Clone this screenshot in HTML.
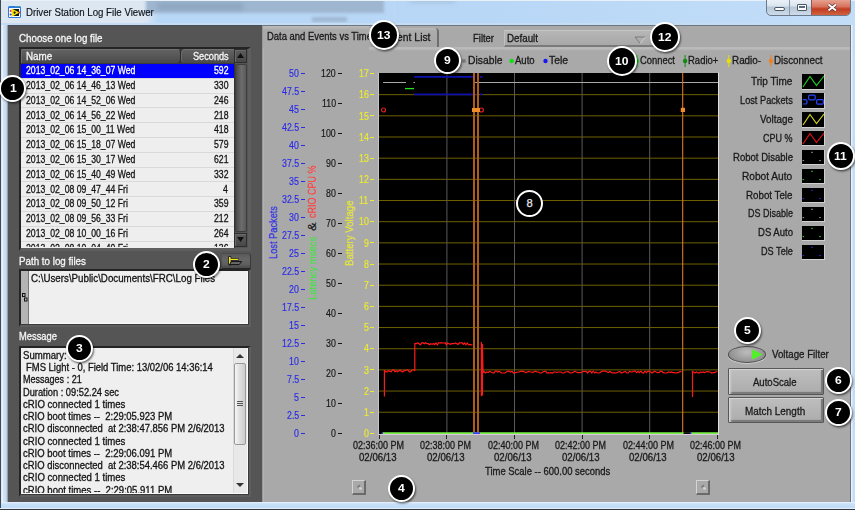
<!DOCTYPE html>
<html><head><meta charset="utf-8"><style>
*{margin:0;padding:0;box-sizing:border-box}
html,body{width:855px;height:510px;overflow:hidden;background:#b9d7f5}
body{position:relative;font-family:"Liberation Sans",sans-serif;font-size:10px;color:#1a1a1a}
.a{position:absolute}
.t{position:absolute;white-space:nowrap;line-height:1;transform-origin:0 0}
.co{position:absolute;border-radius:50%;background:#000;border:2px solid #fff;box-shadow:1px 1.5px 2px rgba(0,0,0,.55)}
</style></head><body>
<div class="a" style="left:0;top:0;width:855px;height:510px;background:#b8d6f4"></div>
<div class="a" style="left:0;top:0;width:855px;height:25px;overflow:hidden;background:linear-gradient(90deg,#b8d7f6 0,#b8d7f6 480px,#c2ddf8 855px)"><div class="a" style="left:-20px;top:-5px;width:172px;height:34px;background:#dde7f1;filter:blur(4px)"></div><div class="a" style="left:146px;top:-2px;width:238px;height:14.5px;background:#9eb6d0;filter:blur(1.5px)"></div><div class="a" style="left:158px;top:3px;width:85px;height:7px;background:#8ea6c0;filter:blur(2px)"></div><div class="a" style="left:312px;top:17px;width:35px;height:5px;background:#a0b8d2;filter:blur(1.5px)"></div><div class="a" style="left:394px;top:0;width:1px;height:24px;background:#c0d8f0"></div><div class="a" style="left:410px;top:-3px;width:45px;height:6px;background:#a8c4e0;filter:blur(2px)"></div><div class="a" style="left:0;top:0;width:855px;height:1px;background:#e8f0f8"></div><div class="a" style="left:0;top:23px;width:855px;height:2px;background:#c4dcf4"></div></div>
<div class="a" style="left:0;top:0;width:1px;height:510px;background:#3e4a56"></div>
<div class="a" style="left:1px;top:25px;width:7px;height:477px;background:linear-gradient(90deg,#c8d8e8 0,#f2f8fd 1px,#d4e4f4 2.5px,#c6dbf0 5px,#aec4da 6px,#70808e 7px)"></div>
<div class="a" style="left:851px;top:25px;width:4px;height:477px;background:linear-gradient(90deg,#eef6fd 0,#e4f0fc 1px,#c4def8 2px,#c2dcf6 4px)"></div>
<div class="a" style="left:1px;top:502px;width:854px;height:6px;background:linear-gradient(180deg,#e8f2fc,#c8e0f8 2px,#c2dcf6 5px)"></div>
<div class="a" style="left:0;top:508px;width:855px;height:1px;background:#e4eef8"></div>
<div class="a" style="left:0;top:509px;width:855px;height:1px;background:#2e3640"></div>
<div class="a" style="left:8px;top:5.7px;width:13px;height:12.5px;background:#fff;border:1px solid #2a78e0;border-top:2.5px solid #2a78e0;border-radius:1.5px"></div>
<div class="a" style="left:15px;top:5.9px;width:4px;height:1.5px;background:#40a890"></div>
<div class="a" style="left:12px;top:9px;width:7px;height:7px;background:#101810"></div>
<svg class="a" style="left:9px;top:8px" width="12" height="10"><polygon points="2.5,0.5 10.5,4.5 2.5,9" fill="#f4e010"/><circle cx="5.6" cy="4.6" r="1.1" fill="#111"/><circle cx="1.6" cy="3" r="1" fill="#e83030"/><circle cx="1.6" cy="6.4" r="1" fill="#3030e8"/><circle cx="10.6" cy="4.4" r="1" fill="#e83030"/></svg>
<div class="t" style="left:25.90px;top:7.59px;font-size:10.4px;color:#0c1018;-webkit-text-stroke:0.15px #0c1018;transform:scaleX(0.9310);">Driver Station Log File Viewer</div>
<div class="a" style="left:766px;top:-3px;width:85px;height:19px;border:1px solid #6a7a8c;border-radius:0 0 5px 5px;background:linear-gradient(180deg,#f0f5fa 0,#dbe5ef 45%,#b8c8d8 55%,#cddbe9 100%);overflow:hidden">
<div class="a" style="left:44px;top:0;width:41px;height:19px;background:linear-gradient(180deg,#eab0a0 0,#d8735e 45%,#c03c22 58%,#d8704a 100%);border-left:1px solid #8a5a50"></div>
<div class="a" style="left:22px;top:0;width:1px;height:19px;background:#8a9aaa"></div>
<div class="a" style="left:7px;top:9.3px;width:11px;height:4px;background:#fff;border:1px solid #4a5866;border-radius:2px"></div>
<div class="a" style="left:30px;top:5.6px;width:10px;height:7.5px;background:#fff;border:1px solid #4a5866;border-radius:1px"></div>
<div class="a" style="left:32px;top:7.6px;width:6px;height:2.5px;background:#5a6a7a"></div>
<svg class="a" style="left:59px;top:4px" width="13" height="11"><path d="M2.5 2.5L10 8.5M10 2.5L2.5 8.5" stroke="#5a3030" stroke-width="3.4"/><path d="M2.5 2.5L10 8.5M10 2.5L2.5 8.5" stroke="#fff" stroke-width="2"/></svg>
</div>
<div class="a" style="left:8px;top:25px;width:254px;height:477px;background:#555555"></div>
<div class="a" style="left:262px;top:25px;width:589px;height:477px;background:#a9a9a9;border-left:1px solid #989898;border-right:1px solid #6c737a;border-top:1px solid #6e7680;box-shadow:inset 1px 0 0 #b2b2b2"></div>
<div class="a" style="left:8px;top:25px;width:254px;height:1px;background:#4a4f55"></div>
<div class="t" style="left:19.10px;top:32.92px;font-size:10.6px;color:#f6f6f6;-webkit-text-stroke:0.3px #f6f6f6;transform:scaleX(0.9203);">Choose one log file</div>
<div class="a" style="left:19px;top:47px;width:231.6px;height:203.7px;border-style:solid;border-width:2px 3px 3px 2px;border-color:#242424 #5e5e5e #5e5e5e #242424;background:#3a3a3a"></div>
<div class="a" style="left:21px;top:49px;width:160px;height:14px;background:linear-gradient(180deg,#626262,#4a4a4a);border-top:1px solid #727272;border-left:1px solid #6a6a6a;border-right:1px solid #2a2a2a;border-radius:0 4px 4px 0"></div>
<div class="a" style="left:181px;top:49px;width:53px;height:14px;background:linear-gradient(180deg,#626262,#4a4a4a);border-top:1px solid #727272;border-left:1px solid #6a6a6a;border-radius:4px 0 0 4px"></div>
<div class="t" style="left:25.60px;top:50.62px;font-size:10.6px;color:#f6f6f6;-webkit-text-stroke:0.3px #f6f6f6;transform:scaleX(0.9293);">Name</div>
<div class="t" style="left:192.60px;top:50.62px;font-size:10.6px;color:#f6f6f6;-webkit-text-stroke:0.3px #f6f6f6;transform:scaleX(0.8658);">Seconds</div>
<div class="a" style="left:234px;top:49px;width:14px;height:199px;background:#555;border-left:1px solid #333"></div>
<div class="a" style="left:234px;top:49px;width:13px;height:14px;background:linear-gradient(180deg,#5c5c5c,#484848);border:1px solid #2e2e2e;box-shadow:inset 1px 1px 0 #6a6a6a"></div>
<svg class="a" style="left:236px;top:52px" width="9" height="8"><polygon points="4.5,1 8,6 1,6" fill="#111"/></svg>
<div class="a" style="left:235px;top:64px;width:12px;height:168px;background:linear-gradient(90deg,#4a4a4a,#6c6c6c 55%,#5a5a5a);border-radius:2px;border:1px solid #3e3e3e"></div>
<div class="a" style="left:234px;top:233px;width:13px;height:14px;background:linear-gradient(180deg,#5c5c5c,#484848);border:1px solid #2e2e2e;box-shadow:inset 1px 1px 0 #6a6a6a"></div>
<svg class="a" style="left:236px;top:236px" width="9" height="8"><polygon points="1,1 8,1 4.5,6" fill="#111"/></svg>
<div class="a" style="left:21px;top:63.5px;width:213px;height:184px;background:repeating-linear-gradient(180deg,#eeeeee 0,#eeeeee 13.8px,#d9d9d9 13.8px,#d9d9d9 14.8px)"></div>
<div class="a" style="left:21px;top:63.5px;width:213px;height:14.8px;background:#0000ff"></div>
<div class="t" style="left:25.60px;top:65.12px;font-size:10.6px;color:#ffffff;-webkit-text-stroke:0.3px #ffffff;transform:scaleX(0.8195);">2013_02_06 14_36_07 Wed</div>
<div class="t" style="left:213.79px;top:65.12px;font-size:10.6px;color:#ffffff;-webkit-text-stroke:0.3px #ffffff;transform:scaleX(0.8195);">592</div>
<div class="t" style="left:25.60px;top:79.92px;font-size:10.6px;color:#141414;-webkit-text-stroke:0.3px #141414;transform:scaleX(0.8195);">2013_02_06 14_46_13 Wed</div>
<div class="t" style="left:213.79px;top:79.92px;font-size:10.6px;color:#141414;-webkit-text-stroke:0.3px #141414;transform:scaleX(0.8195);">330</div>
<div class="t" style="left:25.60px;top:94.72px;font-size:10.6px;color:#141414;-webkit-text-stroke:0.3px #141414;transform:scaleX(0.8195);">2013_02_06 14_52_06 Wed</div>
<div class="t" style="left:213.79px;top:94.72px;font-size:10.6px;color:#141414;-webkit-text-stroke:0.3px #141414;transform:scaleX(0.8195);">246</div>
<div class="t" style="left:25.60px;top:109.52px;font-size:10.6px;color:#141414;-webkit-text-stroke:0.3px #141414;transform:scaleX(0.8195);">2013_02_06 14_56_22 Wed</div>
<div class="t" style="left:213.79px;top:109.52px;font-size:10.6px;color:#141414;-webkit-text-stroke:0.3px #141414;transform:scaleX(0.8195);">218</div>
<div class="t" style="left:25.60px;top:124.32px;font-size:10.6px;color:#141414;-webkit-text-stroke:0.3px #141414;transform:scaleX(0.8195);">2013_02_06 15_00_11 Wed</div>
<div class="t" style="left:213.79px;top:124.32px;font-size:10.6px;color:#141414;-webkit-text-stroke:0.3px #141414;transform:scaleX(0.8195);">418</div>
<div class="t" style="left:25.60px;top:139.12px;font-size:10.6px;color:#141414;-webkit-text-stroke:0.3px #141414;transform:scaleX(0.8195);">2013_02_06 15_18_07 Wed</div>
<div class="t" style="left:213.79px;top:139.12px;font-size:10.6px;color:#141414;-webkit-text-stroke:0.3px #141414;transform:scaleX(0.8195);">579</div>
<div class="t" style="left:25.60px;top:153.92px;font-size:10.6px;color:#141414;-webkit-text-stroke:0.3px #141414;transform:scaleX(0.8195);">2013_02_06 15_30_17 Wed</div>
<div class="t" style="left:213.79px;top:153.92px;font-size:10.6px;color:#141414;-webkit-text-stroke:0.3px #141414;transform:scaleX(0.8195);">621</div>
<div class="t" style="left:25.60px;top:168.72px;font-size:10.6px;color:#141414;-webkit-text-stroke:0.3px #141414;transform:scaleX(0.8195);">2013_02_06 15_40_49 Wed</div>
<div class="t" style="left:213.79px;top:168.72px;font-size:10.6px;color:#141414;-webkit-text-stroke:0.3px #141414;transform:scaleX(0.8195);">332</div>
<div class="t" style="left:25.60px;top:183.52px;font-size:10.6px;color:#141414;-webkit-text-stroke:0.3px #141414;transform:scaleX(0.8195);">2013_02_08 09_47_44 Fri</div>
<div class="t" style="left:223.48px;top:183.52px;font-size:10.6px;color:#141414;-webkit-text-stroke:0.3px #141414;transform:scaleX(0.8195);">4</div>
<div class="t" style="left:25.60px;top:198.32px;font-size:10.6px;color:#141414;-webkit-text-stroke:0.3px #141414;transform:scaleX(0.8195);">2013_02_08 09_50_12 Fri</div>
<div class="t" style="left:213.79px;top:198.32px;font-size:10.6px;color:#141414;-webkit-text-stroke:0.3px #141414;transform:scaleX(0.8195);">359</div>
<div class="t" style="left:25.60px;top:213.12px;font-size:10.6px;color:#141414;-webkit-text-stroke:0.3px #141414;transform:scaleX(0.8195);">2013_02_08 09_56_33 Fri</div>
<div class="t" style="left:213.79px;top:213.12px;font-size:10.6px;color:#141414;-webkit-text-stroke:0.3px #141414;transform:scaleX(0.8195);">212</div>
<div class="t" style="left:25.60px;top:227.92px;font-size:10.6px;color:#141414;-webkit-text-stroke:0.3px #141414;transform:scaleX(0.8195);">2013_02_08 10_00_16 Fri</div>
<div class="t" style="left:213.79px;top:227.92px;font-size:10.6px;color:#141414;-webkit-text-stroke:0.3px #141414;transform:scaleX(0.8195);">264</div>
<div class="a" style="left:21px;top:241.1px;width:213px;height:6.4px;overflow:hidden">
<div class="t" style="left:4.60px;top:1.62px;font-size:10.6px;color:#141414;-webkit-text-stroke:0.3px #141414;transform:scaleX(0.8195);">2013_02_08 10_04_40 Fri</div>
<div class="t" style="left:192.79px;top:1.62px;font-size:10.6px;color:#141414;-webkit-text-stroke:0.3px #141414;transform:scaleX(0.8195);">136</div>
</div>
<div class="t" style="left:19.20px;top:256.32px;font-size:10.6px;color:#f6f6f6;-webkit-text-stroke:0.3px #f6f6f6;transform:scaleX(0.9241);">Path to log files</div>
<div class="a" style="left:220.5px;top:253px;width:30px;height:17px;background:linear-gradient(180deg,#5a5a5a 0,#666 40%,#5e5e5e 75%,#4a4a4a 100%);border-top:1px solid #4a4a4a;border-left:1px solid #555;border-right:1px solid #3a3a3a;border-bottom:2px solid #262626;border-radius:3px 3px 0 0"></div>
<svg class="a" style="left:227px;top:255px" width="17" height="12"><path d="M2.8 9 V2.3" stroke="#141430" stroke-width="3.2" stroke-linecap="round"/><path d="M3 4.4 H11.6" stroke="#141430" stroke-width="2.8"/><path d="M2.8 8.6 V2.6" stroke="#f0e818" stroke-width="1.7" stroke-linecap="round"/><path d="M3.2 4.4 H11.2" stroke="#f0e818" stroke-width="1.3"/><polygon points="2.6,9.6 12.2,9.6 14.6,6.6 4.2,6.6" fill="#6a6a6a" stroke="#111" stroke-width="1"/></svg>
<div class="a" style="left:19px;top:269px;width:231.5px;height:57.5px;border-style:solid;border-width:2px 3px 3px 2px;border-color:#242424 #5e5e5e #5e5e5e #242424;background:#3a3a3a"></div>
<div class="a" style="left:247.5px;top:271px;width:1px;height:53.5px;background:#3a3a3a"></div>
<div class="a" style="left:21px;top:323.5px;width:227.5px;height:1px;background:#3a3a3a"></div>
<div class="a" style="left:21px;top:271px;width:226.5px;height:52.5px;background:#efefef;border-right:1px solid #fafafa;border-bottom:1px solid #fafafa"></div>
<div class="a" style="left:21px;top:271px;width:8px;height:53px;background:#b4b4b4;border-right:1px solid #777"></div>
<svg class="a" style="left:22px;top:293px" width="6" height="10"><rect x="0.5" y="0.5" width="2.5" height="3" fill="none" stroke="#111" stroke-width="1"/><rect x="2.5" y="5" width="2.5" height="3" fill="none" stroke="#111" stroke-width="1"/></svg>
<div class="t" style="left:30.70px;top:272.82px;font-size:10.6px;color:#141414;-webkit-text-stroke:0.3px #141414;transform:scaleX(0.9197);">C:\Users\Public\Documents\FRC\Log Files</div>
<div class="t" style="left:19.20px;top:330.92px;font-size:10.6px;color:#f6f6f6;-webkit-text-stroke:0.3px #f6f6f6;transform:scaleX(0.8807);">Message</div>
<div class="a" style="left:19px;top:346px;width:231.5px;height:150.5px;border-style:solid;border-width:2px 3px 3px 2px;border-color:#242424 #5e5e5e #5e5e5e #242424;background:#3a3a3a"></div>
<div class="a" style="left:247.5px;top:348px;width:1px;height:146.5px;background:#3a3a3a"></div>
<div class="a" style="left:21px;top:493.5px;width:227.5px;height:1px;background:#3a3a3a"></div>
<div class="a" style="left:21px;top:348px;width:226.5px;height:145.5px;background:#efefef;border-right:1px solid #fafafa;border-bottom:1px solid #fafafa;overflow:hidden">
<div class="t" style="left:2.10px;top:2.93px;font-size:10.0px;color:#141414;-webkit-text-stroke:0.3px #141414;transform:scaleX(0.9597);">Summary:</div>
<div class="t" style="left:4.70px;top:15.18px;font-size:10.0px;color:#141414;-webkit-text-stroke:0.3px #141414;transform:scaleX(0.9439);">FMS Light - 0, Field Time: 13/02/06 14:36:14</div>
<div class="t" style="left:2.10px;top:27.43px;font-size:10.0px;color:#141414;-webkit-text-stroke:0.3px #141414;transform:scaleX(0.9024);">Messages : 21</div>
<div class="t" style="left:2.10px;top:39.68px;font-size:10.0px;color:#141414;-webkit-text-stroke:0.3px #141414;transform:scaleX(0.9284);">Duration : 09:52.24 sec</div>
<div class="t" style="left:2.10px;top:51.93px;font-size:10.0px;color:#141414;-webkit-text-stroke:0.3px #141414;transform:scaleX(0.9597);">cRIO connected 1 times</div>
<div class="t" style="left:2.10px;top:64.18px;font-size:10.0px;color:#141414;-webkit-text-stroke:0.3px #141414;transform:scaleX(0.9485);">cRIO&nbsp;boot&nbsp;times&nbsp;--&nbsp;&nbsp;2:29:05.923&nbsp;PM</div>
<div class="t" style="left:2.10px;top:76.43px;font-size:10.0px;color:#141414;-webkit-text-stroke:0.3px #141414;transform:scaleX(0.9440);">cRIO&nbsp;disconnected&nbsp;&nbsp;at&nbsp;2:38:47.856&nbsp;PM&nbsp;2/6/2013</div>
<div class="t" style="left:2.10px;top:88.68px;font-size:10.0px;color:#141414;-webkit-text-stroke:0.3px #141414;transform:scaleX(0.9597);">cRIO connected 1 times</div>
<div class="t" style="left:2.10px;top:100.93px;font-size:10.0px;color:#141414;-webkit-text-stroke:0.3px #141414;transform:scaleX(0.9485);">cRIO&nbsp;boot&nbsp;times&nbsp;--&nbsp;&nbsp;2:29:06.091&nbsp;PM</div>
<div class="t" style="left:2.10px;top:113.18px;font-size:10.0px;color:#141414;-webkit-text-stroke:0.3px #141414;transform:scaleX(0.9440);">cRIO&nbsp;disconnected&nbsp;&nbsp;at&nbsp;2:38:54.466&nbsp;PM&nbsp;2/6/2013</div>
<div class="t" style="left:2.10px;top:125.43px;font-size:10.0px;color:#141414;-webkit-text-stroke:0.3px #141414;transform:scaleX(0.9597);">cRIO connected 1 times</div>
<div class="t" style="left:2.10px;top:137.68px;font-size:10.0px;color:#141414;-webkit-text-stroke:0.3px #141414;transform:scaleX(0.9531);">cRIO&nbsp;boot&nbsp;times&nbsp;--&nbsp;&nbsp;2:29:05.911&nbsp;PM</div>
<div class="a" style="left:212px;top:0;width:14px;height:145px;background:#e8e8e8;border-left:1px solid #dadada"></div>
<svg class="a" style="left:214px;top:5px" width="10" height="6"><polygon points="5,1 9,5 1,5" fill="#333"/></svg>
<div class="a" style="left:213px;top:15px;width:12px;height:82px;background:linear-gradient(90deg,#f6f6f6,#e0e0e0 45%,#cdcdcd);border:1px solid #9a9a9a;border-radius:2px"></div>
<div class="a" style="left:216px;top:53px;width:6px;height:5px;border-top:1px solid #555;border-bottom:1px solid #555"></div>
<div class="a" style="left:216px;top:55px;width:6px;height:1px;background:#555"></div>
<svg class="a" style="left:214px;top:134px" width="10" height="6"><polygon points="1,1 9,1 5,5" fill="#333"/></svg>
</div>
<div class="a" style="left:369px;top:47px;width:481px;height:3.5px;background:linear-gradient(180deg,#b4b4b4 0,#bebebe 1px,#acacac 3.5px)"></div>
<div class="a" style="left:263px;top:26px;width:106px;height:22px;background:linear-gradient(180deg,#bababa 0,#b4b4b4 2px,#a9a9a9 4px)"></div>
<div class="t" style="left:266.60px;top:31.12px;font-size:10.6px;color:#1a1a1a;-webkit-text-stroke:0.3px #1a1a1a;transform:scaleX(0.8912);">Data and Events vs Time</div>
<div class="a" style="left:369px;top:28px;width:70px;height:19px;background:linear-gradient(180deg,#b8b8b8 0,#acacac 3px,#a6a6a6 100%);border-right:2px solid #6e6e6e;border-radius:0 4px 0 0"></div>
<div class="t" style="left:385.30px;top:32.02px;font-size:10.6px;color:#1a1a1a;-webkit-text-stroke:0.3px #1a1a1a;transform:scaleX(0.9778);">Event List</div>
<div class="t" style="left:473.00px;top:32.92px;font-size:10.6px;color:#1a1a1a;-webkit-text-stroke:0.3px #1a1a1a;transform:scaleX(0.8924);">Filter</div>
<div class="a" style="left:503.8px;top:30px;width:170px;height:16.5px;background:linear-gradient(180deg,#b6b6b6,#a8a8a8);border-top:1px solid #c6c6c6;border-left:1px solid #c0c0c0;border-bottom:2px solid #7a7a7a"></div>
<div class="t" style="left:506.60px;top:32.92px;font-size:10.6px;color:#1a1a1a;-webkit-text-stroke:0.3px #1a1a1a;transform:scaleX(0.9226);">Default</div>
<svg class="a" style="left:634px;top:35.5px" width="13" height="9"><path d="M1 1 H11.5" stroke="#7a7a7a" stroke-width="1"/><path d="M1 1 L6.2 7.5" stroke="#7a7a7a" stroke-width="1"/><path d="M11.5 1 L6.2 7.5" stroke="#c8c8c8" stroke-width="1.1"/></svg>
<svg class="a" style="left:455px;top:54px" width="380" height="14"><circle cx="9" cy="7" r="2" fill="#7a7a7a"/><circle cx="56.6" cy="7" r="2.2" fill="#10e010"/><circle cx="90.5" cy="7" r="2.2" fill="#1818f0"/><line x1="182" y1="1" x2="182" y2="13" stroke="#10e010" stroke-width="1"/><circle cx="182" cy="7" r="2" fill="#10e010"/><line x1="230.1" y1="1" x2="230.1" y2="13" stroke="#108a10" stroke-width="1"/><circle cx="230.1" cy="7" r="2.2" fill="#108a10"/><line x1="273.8" y1="1" x2="273.8" y2="13" stroke="#e8e000" stroke-width="1"/><circle cx="273.8" cy="7" r="2.2" fill="#e8e000"/><line x1="316" y1="1" x2="316" y2="13" stroke="#f08020" stroke-width="1"/><circle cx="316" cy="7" r="2.2" fill="#f08020"/></svg>
<div class="t" style="left:468.00px;top:55.32px;font-size:10.6px;color:#1a1a1a;-webkit-text-stroke:0.3px #1a1a1a;transform:scaleX(0.9759);">Disable</div>
<div class="t" style="left:515.40px;top:55.32px;font-size:10.6px;color:#1a1a1a;-webkit-text-stroke:0.3px #1a1a1a;transform:scaleX(0.8998);">Auto</div>
<div class="t" style="left:548.80px;top:55.32px;font-size:10.6px;color:#1a1a1a;-webkit-text-stroke:0.3px #1a1a1a;transform:scaleX(0.9768);">Tele</div>
<div class="t" style="left:640.30px;top:55.32px;font-size:10.6px;color:#1a1a1a;-webkit-text-stroke:0.3px #1a1a1a;transform:scaleX(0.8864);">Connect</div>
<div class="t" style="left:688.20px;top:55.32px;font-size:10.6px;color:#1a1a1a;-webkit-text-stroke:0.3px #1a1a1a;transform:scaleX(0.8976);">Radio+</div>
<div class="t" style="left:731.90px;top:55.32px;font-size:10.6px;color:#1a1a1a;-webkit-text-stroke:0.3px #1a1a1a;transform:scaleX(0.9322);">Radio-</div>
<div class="t" style="left:774.00px;top:55.32px;font-size:10.6px;color:#1a1a1a;-webkit-text-stroke:0.3px #1a1a1a;transform:scaleX(0.9272);">Disconnect</div>
<div class="t" style="left:267.76px;top:259.40px;font-size:10.8px;color:#2a2ae8;-webkit-text-stroke:0.15px #2a2ae8;transform-origin:0 0;transform:rotate(-90deg) scaleX(0.8572)">Lost Packets</div>
<div class="t" style="left:306.96px;top:299.90px;font-size:10.8px;color:#44e044;-webkit-text-stroke:0.15px #44e044;transform-origin:0 0;transform:rotate(-90deg) scaleX(0.8787)">Latency msecs</div>
<div class="t" style="left:307.16px;top:231.40px;font-size:10.8px;color:#141414;-webkit-text-stroke:0.15px #141414;transform-origin:0 0;transform:rotate(-90deg) scaleX(1.2114)">&amp;</div>
<div class="t" style="left:307.06px;top:218.00px;font-size:10.8px;color:#ff3c3c;-webkit-text-stroke:0.15px #ff3c3c;transform-origin:0 0;transform:rotate(-90deg) scaleX(0.8331)">cRIO CPU %</div>
<div class="t" style="left:344.46px;top:265.60px;font-size:10.8px;color:#e8e830;-webkit-text-stroke:0.15px #e8e830;transform-origin:0 0;transform:rotate(-90deg) scaleX(0.8945)">Battery Voltage</div>
<div class="t" style="left:294.30px;top:429.16px;font-size:10.2px;color:#2a2ae8;-webkit-text-stroke:0.15px #2a2ae8;transform:scaleX(0.8656);">0</div>
<div class="a" style="left:300.5px;top:432.90px;width:4.5px;height:1px;background:#2a2ae8"></div>
<div class="t" style="left:286.93px;top:411.17px;font-size:10.2px;color:#2a2ae8;-webkit-text-stroke:0.15px #2a2ae8;transform:scaleX(0.8656);">2.5</div>
<div class="a" style="left:300.5px;top:414.90px;width:4.5px;height:1px;background:#2a2ae8"></div>
<div class="t" style="left:294.30px;top:393.17px;font-size:10.2px;color:#2a2ae8;-webkit-text-stroke:0.15px #2a2ae8;transform:scaleX(0.8656);">5</div>
<div class="a" style="left:300.5px;top:396.91px;width:4.5px;height:1px;background:#2a2ae8"></div>
<div class="t" style="left:286.93px;top:375.18px;font-size:10.2px;color:#2a2ae8;-webkit-text-stroke:0.15px #2a2ae8;transform:scaleX(0.8656);">7.5</div>
<div class="a" style="left:300.5px;top:378.91px;width:4.5px;height:1px;background:#2a2ae8"></div>
<div class="t" style="left:289.40px;top:357.18px;font-size:10.2px;color:#2a2ae8;-webkit-text-stroke:0.15px #2a2ae8;transform:scaleX(0.8656);">10</div>
<div class="a" style="left:300.5px;top:360.92px;width:4.5px;height:1px;background:#2a2ae8"></div>
<div class="t" style="left:282.03px;top:339.19px;font-size:10.2px;color:#2a2ae8;-webkit-text-stroke:0.15px #2a2ae8;transform:scaleX(0.8656);">12.5</div>
<div class="a" style="left:300.5px;top:342.92px;width:4.5px;height:1px;background:#2a2ae8"></div>
<div class="t" style="left:289.40px;top:321.19px;font-size:10.2px;color:#2a2ae8;-webkit-text-stroke:0.15px #2a2ae8;transform:scaleX(0.8656);">15</div>
<div class="a" style="left:300.5px;top:324.93px;width:4.5px;height:1px;background:#2a2ae8"></div>
<div class="t" style="left:282.03px;top:303.20px;font-size:10.2px;color:#2a2ae8;-webkit-text-stroke:0.15px #2a2ae8;transform:scaleX(0.8656);">17.5</div>
<div class="a" style="left:300.5px;top:306.94px;width:4.5px;height:1px;background:#2a2ae8"></div>
<div class="t" style="left:289.40px;top:285.20px;font-size:10.2px;color:#2a2ae8;-webkit-text-stroke:0.15px #2a2ae8;transform:scaleX(0.8656);">20</div>
<div class="a" style="left:300.5px;top:288.94px;width:4.5px;height:1px;background:#2a2ae8"></div>
<div class="t" style="left:282.03px;top:267.21px;font-size:10.2px;color:#2a2ae8;-webkit-text-stroke:0.15px #2a2ae8;transform:scaleX(0.8656);">22.5</div>
<div class="a" style="left:300.5px;top:270.94px;width:4.5px;height:1px;background:#2a2ae8"></div>
<div class="t" style="left:289.40px;top:249.21px;font-size:10.2px;color:#2a2ae8;-webkit-text-stroke:0.15px #2a2ae8;transform:scaleX(0.8656);">25</div>
<div class="a" style="left:300.5px;top:252.95px;width:4.5px;height:1px;background:#2a2ae8"></div>
<div class="t" style="left:282.03px;top:231.22px;font-size:10.2px;color:#2a2ae8;-webkit-text-stroke:0.15px #2a2ae8;transform:scaleX(0.8656);">27.5</div>
<div class="a" style="left:300.5px;top:234.95px;width:4.5px;height:1px;background:#2a2ae8"></div>
<div class="t" style="left:289.40px;top:213.22px;font-size:10.2px;color:#2a2ae8;-webkit-text-stroke:0.15px #2a2ae8;transform:scaleX(0.8656);">30</div>
<div class="a" style="left:300.5px;top:216.96px;width:4.5px;height:1px;background:#2a2ae8"></div>
<div class="t" style="left:282.03px;top:195.23px;font-size:10.2px;color:#2a2ae8;-webkit-text-stroke:0.15px #2a2ae8;transform:scaleX(0.8656);">32.5</div>
<div class="a" style="left:300.5px;top:198.96px;width:4.5px;height:1px;background:#2a2ae8"></div>
<div class="t" style="left:289.40px;top:177.23px;font-size:10.2px;color:#2a2ae8;-webkit-text-stroke:0.15px #2a2ae8;transform:scaleX(0.8656);">35</div>
<div class="a" style="left:300.5px;top:180.97px;width:4.5px;height:1px;background:#2a2ae8"></div>
<div class="t" style="left:282.03px;top:159.24px;font-size:10.2px;color:#2a2ae8;-webkit-text-stroke:0.15px #2a2ae8;transform:scaleX(0.8656);">37.5</div>
<div class="a" style="left:300.5px;top:162.97px;width:4.5px;height:1px;background:#2a2ae8"></div>
<div class="t" style="left:289.40px;top:141.24px;font-size:10.2px;color:#2a2ae8;-webkit-text-stroke:0.15px #2a2ae8;transform:scaleX(0.8656);">40</div>
<div class="a" style="left:300.5px;top:144.98px;width:4.5px;height:1px;background:#2a2ae8"></div>
<div class="t" style="left:282.03px;top:123.25px;font-size:10.2px;color:#2a2ae8;-webkit-text-stroke:0.15px #2a2ae8;transform:scaleX(0.8656);">42.5</div>
<div class="a" style="left:300.5px;top:126.99px;width:4.5px;height:1px;background:#2a2ae8"></div>
<div class="t" style="left:289.40px;top:105.25px;font-size:10.2px;color:#2a2ae8;-webkit-text-stroke:0.15px #2a2ae8;transform:scaleX(0.8656);">45</div>
<div class="a" style="left:300.5px;top:108.99px;width:4.5px;height:1px;background:#2a2ae8"></div>
<div class="t" style="left:282.03px;top:87.26px;font-size:10.2px;color:#2a2ae8;-webkit-text-stroke:0.15px #2a2ae8;transform:scaleX(0.8656);">47.5</div>
<div class="a" style="left:300.5px;top:91.00px;width:4.5px;height:1px;background:#2a2ae8"></div>
<div class="t" style="left:289.40px;top:69.26px;font-size:10.2px;color:#2a2ae8;-webkit-text-stroke:0.15px #2a2ae8;transform:scaleX(0.8656);">50</div>
<div class="a" style="left:300.5px;top:73.00px;width:4.5px;height:1px;background:#2a2ae8"></div>
<div class="t" style="left:330.70px;top:429.16px;font-size:10.2px;color:#141414;-webkit-text-stroke:0.15px #141414;transform:scaleX(0.8656);">0</div>
<div class="a" style="left:338px;top:432.90px;width:4px;height:1px;background:#141414"></div>
<div class="t" style="left:325.80px;top:399.17px;font-size:10.2px;color:#141414;-webkit-text-stroke:0.15px #141414;transform:scaleX(0.8656);">10</div>
<div class="a" style="left:338px;top:402.91px;width:4px;height:1px;background:#141414"></div>
<div class="t" style="left:325.80px;top:369.18px;font-size:10.2px;color:#141414;-webkit-text-stroke:0.15px #141414;transform:scaleX(0.8656);">20</div>
<div class="a" style="left:338px;top:372.92px;width:4px;height:1px;background:#141414"></div>
<div class="t" style="left:325.80px;top:339.19px;font-size:10.2px;color:#141414;-webkit-text-stroke:0.15px #141414;transform:scaleX(0.8656);">30</div>
<div class="a" style="left:338px;top:342.93px;width:4px;height:1px;background:#141414"></div>
<div class="t" style="left:325.80px;top:309.20px;font-size:10.2px;color:#141414;-webkit-text-stroke:0.15px #141414;transform:scaleX(0.8656);">40</div>
<div class="a" style="left:338px;top:312.93px;width:4px;height:1px;background:#141414"></div>
<div class="t" style="left:325.80px;top:279.21px;font-size:10.2px;color:#141414;-webkit-text-stroke:0.15px #141414;transform:scaleX(0.8656);">50</div>
<div class="a" style="left:338px;top:282.94px;width:4px;height:1px;background:#141414"></div>
<div class="t" style="left:325.80px;top:249.21px;font-size:10.2px;color:#141414;-webkit-text-stroke:0.15px #141414;transform:scaleX(0.8656);">60</div>
<div class="a" style="left:338px;top:252.95px;width:4px;height:1px;background:#141414"></div>
<div class="t" style="left:325.80px;top:219.22px;font-size:10.2px;color:#141414;-webkit-text-stroke:0.15px #141414;transform:scaleX(0.8656);">70</div>
<div class="a" style="left:338px;top:222.96px;width:4px;height:1px;background:#141414"></div>
<div class="t" style="left:325.80px;top:189.23px;font-size:10.2px;color:#141414;-webkit-text-stroke:0.15px #141414;transform:scaleX(0.8656);">80</div>
<div class="a" style="left:338px;top:192.97px;width:4px;height:1px;background:#141414"></div>
<div class="t" style="left:325.80px;top:159.24px;font-size:10.2px;color:#141414;-webkit-text-stroke:0.15px #141414;transform:scaleX(0.8656);">90</div>
<div class="a" style="left:338px;top:162.97px;width:4px;height:1px;background:#141414"></div>
<div class="t" style="left:320.86px;top:129.25px;font-size:10.2px;color:#141414;-webkit-text-stroke:0.15px #141414;transform:scaleX(0.8656);">100</div>
<div class="a" style="left:338px;top:132.98px;width:4px;height:1px;background:#141414"></div>
<div class="t" style="left:321.52px;top:99.26px;font-size:10.2px;color:#141414;-webkit-text-stroke:0.15px #141414;transform:scaleX(0.8656);">110</div>
<div class="a" style="left:338px;top:102.99px;width:4px;height:1px;background:#141414"></div>
<div class="t" style="left:320.86px;top:69.26px;font-size:10.2px;color:#141414;-webkit-text-stroke:0.15px #141414;transform:scaleX(0.8656);">120</div>
<div class="a" style="left:338px;top:73.00px;width:4px;height:1px;background:#141414"></div>
<div class="t" style="left:363.60px;top:429.16px;font-size:10.2px;color:#ecec30;-webkit-text-stroke:0.15px #ecec30;transform:scaleX(0.8656);">0</div>
<div class="a" style="left:370.3px;top:432.90px;width:3.7px;height:1px;background:#ecec30"></div>
<div class="t" style="left:363.60px;top:407.99px;font-size:10.2px;color:#ecec30;-webkit-text-stroke:0.15px #ecec30;transform:scaleX(0.8656);">1</div>
<div class="a" style="left:370.3px;top:411.73px;width:3.7px;height:1px;background:#ecec30"></div>
<div class="t" style="left:363.60px;top:386.82px;font-size:10.2px;color:#ecec30;-webkit-text-stroke:0.15px #ecec30;transform:scaleX(0.8656);">2</div>
<div class="a" style="left:370.3px;top:390.56px;width:3.7px;height:1px;background:#ecec30"></div>
<div class="t" style="left:363.60px;top:365.65px;font-size:10.2px;color:#ecec30;-webkit-text-stroke:0.15px #ecec30;transform:scaleX(0.8656);">3</div>
<div class="a" style="left:370.3px;top:369.39px;width:3.7px;height:1px;background:#ecec30"></div>
<div class="t" style="left:363.60px;top:344.48px;font-size:10.2px;color:#ecec30;-webkit-text-stroke:0.15px #ecec30;transform:scaleX(0.8656);">4</div>
<div class="a" style="left:370.3px;top:348.22px;width:3.7px;height:1px;background:#ecec30"></div>
<div class="t" style="left:363.60px;top:323.31px;font-size:10.2px;color:#ecec30;-webkit-text-stroke:0.15px #ecec30;transform:scaleX(0.8656);">5</div>
<div class="a" style="left:370.3px;top:327.05px;width:3.7px;height:1px;background:#ecec30"></div>
<div class="t" style="left:363.60px;top:302.14px;font-size:10.2px;color:#ecec30;-webkit-text-stroke:0.15px #ecec30;transform:scaleX(0.8656);">6</div>
<div class="a" style="left:370.3px;top:305.88px;width:3.7px;height:1px;background:#ecec30"></div>
<div class="t" style="left:363.60px;top:280.97px;font-size:10.2px;color:#ecec30;-webkit-text-stroke:0.15px #ecec30;transform:scaleX(0.8656);">7</div>
<div class="a" style="left:370.3px;top:284.71px;width:3.7px;height:1px;background:#ecec30"></div>
<div class="t" style="left:363.60px;top:259.80px;font-size:10.2px;color:#ecec30;-webkit-text-stroke:0.15px #ecec30;transform:scaleX(0.8656);">8</div>
<div class="a" style="left:370.3px;top:263.54px;width:3.7px;height:1px;background:#ecec30"></div>
<div class="t" style="left:363.60px;top:238.63px;font-size:10.2px;color:#ecec30;-webkit-text-stroke:0.15px #ecec30;transform:scaleX(0.8656);">9</div>
<div class="a" style="left:370.3px;top:242.36px;width:3.7px;height:1px;background:#ecec30"></div>
<div class="t" style="left:358.70px;top:217.46px;font-size:10.2px;color:#ecec30;-webkit-text-stroke:0.15px #ecec30;transform:scaleX(0.8656);">10</div>
<div class="a" style="left:370.3px;top:221.19px;width:3.7px;height:1px;background:#ecec30"></div>
<div class="t" style="left:359.32px;top:196.29px;font-size:10.2px;color:#ecec30;-webkit-text-stroke:0.15px #ecec30;transform:scaleX(0.8656);">11</div>
<div class="a" style="left:370.3px;top:200.02px;width:3.7px;height:1px;background:#ecec30"></div>
<div class="t" style="left:358.70px;top:175.12px;font-size:10.2px;color:#ecec30;-webkit-text-stroke:0.15px #ecec30;transform:scaleX(0.8656);">12</div>
<div class="a" style="left:370.3px;top:178.85px;width:3.7px;height:1px;background:#ecec30"></div>
<div class="t" style="left:358.70px;top:153.95px;font-size:10.2px;color:#ecec30;-webkit-text-stroke:0.15px #ecec30;transform:scaleX(0.8656);">13</div>
<div class="a" style="left:370.3px;top:157.68px;width:3.7px;height:1px;background:#ecec30"></div>
<div class="t" style="left:358.70px;top:132.78px;font-size:10.2px;color:#ecec30;-webkit-text-stroke:0.15px #ecec30;transform:scaleX(0.8656);">14</div>
<div class="a" style="left:370.3px;top:136.51px;width:3.7px;height:1px;background:#ecec30"></div>
<div class="t" style="left:358.70px;top:111.60px;font-size:10.2px;color:#ecec30;-webkit-text-stroke:0.15px #ecec30;transform:scaleX(0.8656);">15</div>
<div class="a" style="left:370.3px;top:115.34px;width:3.7px;height:1px;background:#ecec30"></div>
<div class="t" style="left:358.70px;top:90.43px;font-size:10.2px;color:#ecec30;-webkit-text-stroke:0.15px #ecec30;transform:scaleX(0.8656);">16</div>
<div class="a" style="left:370.3px;top:94.17px;width:3.7px;height:1px;background:#ecec30"></div>
<div class="t" style="left:358.70px;top:69.26px;font-size:10.2px;color:#ecec30;-webkit-text-stroke:0.15px #ecec30;transform:scaleX(0.8656);">17</div>
<div class="a" style="left:370.3px;top:73.00px;width:3.7px;height:1px;background:#ecec30"></div>
<div class="a" style="left:378px;top:72px;width:341px;height:363px;background:#000;border-top:1px solid #a9a9a9;border-left:1px solid #c4c4c4;border-right:1px solid #e0e0e0;border-bottom:1px solid #d8c8d8"></div>
<svg class="a" style="left:379px;top:73px" width="339" height="361"><line x1="0" y1="339.23" x2="339" y2="339.23" stroke="#6e6000" stroke-width="1"/><line x1="0" y1="318.06" x2="339" y2="318.06" stroke="#6e6000" stroke-width="1"/><line x1="0" y1="296.89" x2="339" y2="296.89" stroke="#6e6000" stroke-width="1"/><line x1="0" y1="275.72" x2="339" y2="275.72" stroke="#6e6000" stroke-width="1"/><line x1="0" y1="254.55" x2="339" y2="254.55" stroke="#6e6000" stroke-width="1"/><line x1="0" y1="233.38" x2="339" y2="233.38" stroke="#6e6000" stroke-width="1"/><line x1="0" y1="212.21" x2="339" y2="212.21" stroke="#6e6000" stroke-width="1"/><line x1="0" y1="191.04" x2="339" y2="191.04" stroke="#6e6000" stroke-width="1"/><line x1="0" y1="169.86" x2="339" y2="169.86" stroke="#6e6000" stroke-width="1"/><line x1="0" y1="148.69" x2="339" y2="148.69" stroke="#6e6000" stroke-width="1"/><line x1="0" y1="127.52" x2="339" y2="127.52" stroke="#6e6000" stroke-width="1"/><line x1="0" y1="106.35" x2="339" y2="106.35" stroke="#6e6000" stroke-width="1"/><line x1="0" y1="85.18" x2="339" y2="85.18" stroke="#6e6000" stroke-width="1"/><line x1="0" y1="64.01" x2="339" y2="64.01" stroke="#6e6000" stroke-width="1"/><line x1="0" y1="42.84" x2="339" y2="42.84" stroke="#6e6000" stroke-width="1"/><line x1="0" y1="21.67" x2="339" y2="21.67" stroke="#6e6000" stroke-width="1"/><line x1="67.90" y1="0" x2="67.90" y2="361" stroke="#5a5a5a" stroke-width="1"/><line x1="135.50" y1="0" x2="135.50" y2="361" stroke="#5a5a5a" stroke-width="1"/><line x1="203.10" y1="0" x2="203.10" y2="361" stroke="#5a5a5a" stroke-width="1"/><line x1="270.70" y1="0" x2="270.70" y2="361" stroke="#5a5a5a" stroke-width="1"/><line x1="35.19999999999999" y1="3.9000000000000057" x2="94.5" y2="3.9000000000000057" stroke="#1010b0" stroke-width="1.7"/><line x1="97.5" y1="3.9000000000000057" x2="99.5" y2="3.9000000000000057" stroke="#1010b0" stroke-width="1.7"/><line x1="101" y1="3.9000000000000057" x2="103.5" y2="3.9000000000000057" stroke="#1010b0" stroke-width="1.7"/><line x1="35.19999999999999" y1="21.299999999999997" x2="94.5" y2="21.299999999999997" stroke="#1010b0" stroke-width="1.7"/><line x1="97.5" y1="21.299999999999997" x2="99.5" y2="21.299999999999997" stroke="#1010b0" stroke-width="1.7"/><line x1="101" y1="21.299999999999997" x2="103.5" y2="21.299999999999997" stroke="#1010b0" stroke-width="1.7"/><line x1="4" y1="9.5" x2="27" y2="9.5" stroke="#a8a8a8" stroke-width="1"/><line x1="34.5" y1="9.5" x2="36" y2="9.5" stroke="#a8a8a8" stroke-width="1"/><line x1="94" y1="9.5" x2="339" y2="9.5" stroke="#a8a8a8" stroke-width="1"/><line x1="26" y1="15.599999999999994" x2="35" y2="15.599999999999994" stroke="#20e020" stroke-width="1.3"/><polyline points="5.40,323.60 5.40,298.00 5.60,297.70 6.90,298.80 8.20,298.80 9.50,297.70 10.80,298.40 12.10,298.80 13.40,297.00 14.70,296.70 16.00,298.80 17.30,297.70 18.60,298.80 19.90,297.70 21.20,297.00 22.50,298.40 23.80,298.80 25.10,297.70 26.40,297.70 27.70,296.70 29.00,297.00 30.30,298.80 31.60,298.80 32.90,297.00 34.20,297.00 35.50,296.70 35.80,298.00 35.80,270.70 36.20,270.70 37.50,270.70 38.80,269.70 40.10,270.70 41.40,271.80 42.70,270.00 44.00,269.70 45.30,270.70 46.60,269.70 47.90,270.70 49.20,270.70 50.50,271.80 51.80,270.70 53.10,271.40 54.40,270.70 55.70,271.40 57.00,270.00 58.30,271.80 59.60,269.70 60.90,270.00 62.20,269.70 63.50,270.00 64.80,270.00 66.10,269.70 67.40,271.80 68.70,270.00 70.00,270.70 71.30,271.40 72.60,270.70 73.90,270.70 75.20,270.70 76.50,270.00 77.80,270.70 79.10,271.40 80.40,269.70 81.70,270.00 83.00,269.70 84.30,271.40 85.60,270.00 86.90,271.80 88.20,270.00 89.50,271.80 90.80,271.40 92.10,271.80 93.40,271.80" fill="none" stroke="#ff1818" stroke-width="1.2"/><polyline points="102.40,269.00 102.40,322.50 103.40,322.00 103.40,271.00 104.00,299.50 105.00,298.40 106.40,300.00 107.80,299.00 109.20,299.60 110.60,298.20 112.00,299.00 113.40,299.60 114.80,300.00 116.20,298.20 117.60,298.20 119.00,299.00 120.40,298.20 121.80,299.60 123.20,300.00 124.60,300.00 126.00,300.00 127.40,299.00 128.80,298.20 130.20,298.20 131.60,299.00 133.00,298.20 134.40,300.00 135.80,299.60 137.20,299.60 138.60,299.00 140.00,299.00 141.40,298.40 142.80,298.20 144.20,298.40 145.60,299.00 147.00,299.60 148.40,299.00 149.80,298.40 151.20,299.00 152.60,299.00 154.00,299.60 155.40,298.40 156.80,298.40 158.20,299.00 159.60,299.00 161.00,300.00 162.40,300.00 163.80,299.00 165.20,298.40 166.60,298.20 168.00,300.00 169.40,299.60 170.80,300.00 172.20,299.60 173.60,300.00 175.00,299.00 176.40,299.00 177.80,299.60 179.20,299.00 180.60,299.00 182.00,299.00 183.40,300.00 184.80,300.00 186.20,299.00 187.60,299.00 189.00,298.40 190.40,299.60 191.80,300.00 193.20,299.60 194.60,299.00 196.00,298.20 197.40,299.00 198.80,299.60 200.20,299.60 201.60,299.60 203.00,299.00 204.40,298.40 205.80,298.40 207.20,298.40 208.60,300.00 210.00,298.40 211.40,298.20 212.80,300.00 214.20,298.20 215.60,300.00 217.00,299.00 218.40,300.00 219.80,300.00 221.20,299.60 222.60,298.40 224.00,298.20 225.40,298.20 226.80,298.20 228.20,299.00 229.60,299.60 231.00,298.40 232.40,299.60 233.80,300.00 235.20,299.60 236.60,300.00 238.00,299.60 239.40,299.00 240.80,298.40 242.20,300.00 243.60,299.60 245.00,299.00 246.40,298.40 247.80,300.00 249.20,300.00 250.60,298.20 252.00,299.00 253.40,299.00 254.80,298.20 256.20,298.20 257.60,299.60 259.00,298.40 260.40,299.60 261.80,298.20 263.20,299.60 264.60,300.00 266.00,298.20 267.40,299.60 268.80,298.20 270.20,298.40 271.60,299.00 273.00,300.00 274.40,299.00 275.80,298.20 277.20,299.00 278.60,299.60 280.00,299.60 281.40,298.20 282.80,298.40 284.20,299.60 285.60,300.00 287.00,300.00 288.40,299.60 289.80,299.00 291.20,299.60 292.60,299.00 294.00,299.60 295.40,299.60 296.80,300.00 298.20,299.60 299.60,299.60 301.00,298.40 302.40,299.00" fill="none" stroke="#ff1818" stroke-width="1.2"/><polyline points="313.50,324.00 313.50,298.50 314.50,299.00 315.90,300.00 317.30,299.00 318.70,299.60 320.10,300.00 321.50,299.00 322.90,299.60 324.30,299.00 325.70,299.60 327.10,299.00 328.50,298.40 329.90,299.00 331.30,299.00 332.70,300.00 334.10,299.60 335.50,299.60 336.90,299.00 338.30,298.40" fill="none" stroke="#ff1818" stroke-width="1.2"/><circle cx="4.5" cy="37" r="2.0" fill="none" stroke="#e02020" stroke-width="1.2"/><circle cx="102.39999999999998" cy="37" r="2.0" fill="none" stroke="#e02020" stroke-width="1.2"/><line x1="95.00" y1="0" x2="95.00" y2="361" stroke="#ae5c1c" stroke-width="2"/><line x1="99.00" y1="0" x2="99.00" y2="361" stroke="#ae5c1c" stroke-width="2"/><line x1="303.70" y1="0" x2="303.70" y2="361" stroke="#e27426" stroke-width="1.1"/><rect x="93" y="35" width="8" height="4" fill="#f08c28"/><rect x="301.79999999999995" y="34.8" width="4.2" height="4.2" fill="#f08c28"/><line x1="4" y1="360.2" x2="339" y2="360.2" stroke="#78f048" stroke-width="2"/><line x1="2.6000000000000227" y1="360.2" x2="4" y2="360.2" stroke="#4040e0" stroke-width="2"/><line x1="94" y1="360.2" x2="101" y2="360.2" stroke="#4040f0" stroke-width="2"/><line x1="304.6" y1="360.2" x2="312" y2="360.2" stroke="#000" stroke-width="2"/><line x1="311" y1="360.2" x2="312.5" y2="360.2" stroke="#3040e0" stroke-width="2"/></svg>
<div class="t" style="left:352.70px;top:440.32px;font-size:10.6px;color:#1a1a1a;-webkit-text-stroke:0.3px #1a1a1a;transform:scaleX(0.8486);">02:36:00 PM</div>
<div class="t" style="left:359.00px;top:451.62px;font-size:10.6px;color:#1a1a1a;-webkit-text-stroke:0.3px #1a1a1a;transform:scaleX(0.9107);">02/06/13</div>
<div class="a" style="left:378.80px;top:435px;width:1px;height:4px;background:#222"></div>
<div class="t" style="left:420.24px;top:440.32px;font-size:10.6px;color:#1a1a1a;-webkit-text-stroke:0.3px #1a1a1a;transform:scaleX(0.8486);">02:38:00 PM</div>
<div class="t" style="left:426.54px;top:451.62px;font-size:10.6px;color:#1a1a1a;-webkit-text-stroke:0.3px #1a1a1a;transform:scaleX(0.9107);">02/06/13</div>
<div class="a" style="left:446.40px;top:435px;width:1px;height:4px;background:#222"></div>
<div class="t" style="left:487.78px;top:440.32px;font-size:10.6px;color:#1a1a1a;-webkit-text-stroke:0.3px #1a1a1a;transform:scaleX(0.8486);">02:40:00 PM</div>
<div class="t" style="left:494.08px;top:451.62px;font-size:10.6px;color:#1a1a1a;-webkit-text-stroke:0.3px #1a1a1a;transform:scaleX(0.9107);">02/06/13</div>
<div class="a" style="left:514.00px;top:435px;width:1px;height:4px;background:#222"></div>
<div class="t" style="left:555.32px;top:440.32px;font-size:10.6px;color:#1a1a1a;-webkit-text-stroke:0.3px #1a1a1a;transform:scaleX(0.8486);">02:42:00 PM</div>
<div class="t" style="left:561.62px;top:451.62px;font-size:10.6px;color:#1a1a1a;-webkit-text-stroke:0.3px #1a1a1a;transform:scaleX(0.9107);">02/06/13</div>
<div class="a" style="left:581.60px;top:435px;width:1px;height:4px;background:#222"></div>
<div class="t" style="left:622.86px;top:440.32px;font-size:10.6px;color:#1a1a1a;-webkit-text-stroke:0.3px #1a1a1a;transform:scaleX(0.8486);">02:44:00 PM</div>
<div class="t" style="left:629.16px;top:451.62px;font-size:10.6px;color:#1a1a1a;-webkit-text-stroke:0.3px #1a1a1a;transform:scaleX(0.9107);">02/06/13</div>
<div class="a" style="left:649.20px;top:435px;width:1px;height:4px;background:#222"></div>
<div class="t" style="left:690.40px;top:440.32px;font-size:10.6px;color:#1a1a1a;-webkit-text-stroke:0.3px #1a1a1a;transform:scaleX(0.8486);">02:46:00 PM</div>
<div class="t" style="left:696.70px;top:451.62px;font-size:10.6px;color:#1a1a1a;-webkit-text-stroke:0.3px #1a1a1a;transform:scaleX(0.9107);">02/06/13</div>
<div class="a" style="left:716.80px;top:435px;width:1px;height:4px;background:#222"></div>
<div class="t" style="left:485.00px;top:465.92px;font-size:10.6px;color:#1a1a1a;-webkit-text-stroke:0.3px #1a1a1a;transform:scaleX(0.8932);">Time Scale -- 600.00 seconds</div>
<div class="a" style="left:352px;top:480px;width:14px;height:14.5px;border-top:1px solid #d4d4d4;border-left:1px solid #d4d4d4;border-right:2px solid #6a6a6a;border-bottom:2px solid #6a6a6a;background:#a9a9a9"></div>
<svg class="a" style="left:352px;top:480px" width="14" height="14"><path d="M5.5 7.2 L7.8 5.2" stroke="#6a6a6a" stroke-width="1.2"/><circle cx="8.5" cy="8.5" r="1.3" fill="#d8d8d8"/></svg>
<div class="a" style="left:696px;top:480px;width:14px;height:14.5px;border-top:1px solid #d4d4d4;border-left:1px solid #d4d4d4;border-right:2px solid #6a6a6a;border-bottom:2px solid #6a6a6a;background:#a9a9a9"></div>
<svg class="a" style="left:696px;top:480px" width="14" height="14"><path d="M5.5 7.2 L7.8 5.2" stroke="#6a6a6a" stroke-width="1.2"/><circle cx="8.5" cy="8.5" r="1.3" fill="#d8d8d8"/></svg>
<div class="t" style="left:751.20px;top:76.02px;font-size:10.6px;color:#1a1a1a;-webkit-text-stroke:0.3px #1a1a1a;transform:scaleX(0.9457);">Trip Time</div>
<div class="a" style="left:802px;top:74.40px;width:23.2px;height:15.3px;background:#000;border-right:1px solid #d0d0d0;border-bottom:1px solid #d0d0d0"><svg width="23" height="15" style="position:absolute;left:0;top:0"><polyline points="1,13 8,2.5 14.5,11.5 22,2" fill="none" stroke="#20d020" stroke-width="1.2"/></svg></div>
<div class="t" style="left:739.80px;top:94.94px;font-size:10.6px;color:#1a1a1a;-webkit-text-stroke:0.3px #1a1a1a;transform:scaleX(0.8701);">Lost Packets</div>
<div class="a" style="left:802px;top:93.32px;width:23.2px;height:15.3px;background:#000;border-right:1px solid #d0d0d0;border-bottom:1px solid #d0d0d0"><svg width="23" height="15" style="position:absolute;left:0;top:0"><path d="M1,6.6 H3.3 Q5,6.6 5,8.2 V9.4 Q5,11 3.3,11 H1" fill="none" stroke="#2844ff" stroke-width="1.2"/><rect x="6.6" y="2.2" width="6.6" height="4.6" rx="1.2" fill="none" stroke="#2844ff" stroke-width="1.2"/><rect x="14.6" y="6.6" width="6.8" height="4.5" rx="1.2" fill="none" stroke="#2844ff" stroke-width="1.2"/></svg></div>
<div class="t" style="left:759.70px;top:113.86px;font-size:10.6px;color:#1a1a1a;-webkit-text-stroke:0.3px #1a1a1a;transform:scaleX(0.9307);">Voltage</div>
<div class="a" style="left:802px;top:112.24px;width:23.2px;height:15.3px;background:#000;border-right:1px solid #d0d0d0;border-bottom:1px solid #d0d0d0"><svg width="23" height="15" style="position:absolute;left:0;top:0"><polyline points="1,13 8,2.5 14.5,11.5 22,2" fill="none" stroke="#d0d020" stroke-width="1.2"/></svg></div>
<div class="t" style="left:763.10px;top:132.78px;font-size:10.6px;color:#1a1a1a;-webkit-text-stroke:0.3px #1a1a1a;transform:scaleX(0.8485);">CPU %</div>
<div class="a" style="left:802px;top:131.16px;width:23.2px;height:15.3px;background:#000;border-right:1px solid #d0d0d0;border-bottom:1px solid #d0d0d0"><svg width="23" height="15" style="position:absolute;left:0;top:0"><polyline points="1,13 8,2.5 14.5,11.5 22,2" fill="none" stroke="#e01010" stroke-width="1.2"/></svg></div>
<div class="t" style="left:732.60px;top:151.70px;font-size:10.6px;color:#1a1a1a;-webkit-text-stroke:0.3px #1a1a1a;transform:scaleX(0.9013);">Robot Disable</div>
<div class="a" style="left:802px;top:150.08px;width:23.2px;height:15.3px;background:#000;border-right:1px solid #d0d0d0;border-bottom:1px solid #d0d0d0"><svg width="23" height="15" style="position:absolute;left:0;top:0"><rect x="9.2" y="1.8" width="1.6" height="1.1" fill="#909090"/><rect x="0.6" y="10" width="1.5" height="1.1" fill="#909090"/><rect x="17.1" y="10" width="1.6" height="1.1" fill="#909090"/></svg></div>
<div class="t" style="left:742.40px;top:170.62px;font-size:10.6px;color:#1a1a1a;-webkit-text-stroke:0.3px #1a1a1a;transform:scaleX(0.9567);">Robot Auto</div>
<div class="a" style="left:802px;top:169.00px;width:23.2px;height:15.3px;background:#000;border-right:1px solid #d0d0d0;border-bottom:1px solid #d0d0d0"><svg width="23" height="15" style="position:absolute;left:0;top:0"><rect x="9.2" y="1.8" width="1.6" height="1.1" fill="#20d020"/><rect x="0.6" y="10" width="1.5" height="1.1" fill="#20d020"/><rect x="17.1" y="10" width="1.6" height="1.1" fill="#20d020"/></svg></div>
<div class="t" style="left:746.10px;top:189.54px;font-size:10.6px;color:#1a1a1a;-webkit-text-stroke:0.3px #1a1a1a;transform:scaleX(0.9206);">Robot Tele</div>
<div class="a" style="left:802px;top:187.92px;width:23.2px;height:15.3px;background:#000;border-right:1px solid #d0d0d0;border-bottom:1px solid #d0d0d0"><svg width="23" height="15" style="position:absolute;left:0;top:0"><rect x="9.2" y="1.8" width="1.6" height="1.1" fill="#2828e0"/><rect x="0.6" y="10" width="1.5" height="1.1" fill="#2828e0"/><rect x="17.1" y="10" width="1.6" height="1.1" fill="#2828e0"/></svg></div>
<div class="t" style="left:747.70px;top:208.46px;font-size:10.6px;color:#1a1a1a;-webkit-text-stroke:0.3px #1a1a1a;transform:scaleX(0.8472);">DS Disable</div>
<div class="a" style="left:802px;top:206.84px;width:23.2px;height:15.3px;background:#000;border-right:1px solid #d0d0d0;border-bottom:1px solid #d0d0d0"><svg width="23" height="15" style="position:absolute;left:0;top:0"><rect x="9.2" y="1.8" width="1.6" height="1.1" fill="#909090"/><rect x="0.6" y="10" width="1.5" height="1.1" fill="#909090"/><rect x="17.1" y="10" width="1.6" height="1.1" fill="#909090"/></svg></div>
<div class="t" style="left:757.60px;top:227.38px;font-size:10.6px;color:#1a1a1a;-webkit-text-stroke:0.3px #1a1a1a;transform:scaleX(0.8997);">DS Auto</div>
<div class="a" style="left:802px;top:225.76px;width:23.2px;height:15.3px;background:#000;border-right:1px solid #d0d0d0;border-bottom:1px solid #d0d0d0"><svg width="23" height="15" style="position:absolute;left:0;top:0"><rect x="9.2" y="1.8" width="1.6" height="1.1" fill="#20d020"/><rect x="0.6" y="10" width="1.5" height="1.1" fill="#20d020"/><rect x="17.1" y="10" width="1.6" height="1.1" fill="#20d020"/></svg></div>
<div class="t" style="left:760.70px;top:246.30px;font-size:10.6px;color:#1a1a1a;-webkit-text-stroke:0.3px #1a1a1a;transform:scaleX(0.8635);">DS Tele</div>
<div class="a" style="left:802px;top:244.68px;width:23.2px;height:15.3px;background:#000;border-right:1px solid #d0d0d0;border-bottom:1px solid #d0d0d0"><svg width="23" height="15" style="position:absolute;left:0;top:0"><rect x="9.2" y="1.8" width="1.6" height="1.1" fill="#2828e0"/><rect x="0.6" y="10" width="1.5" height="1.1" fill="#2828e0"/><rect x="17.1" y="10" width="1.6" height="1.1" fill="#2828e0"/></svg></div>
<div class="a" style="left:728px;top:346px;width:38px;height:16.5px;border-radius:50%;background:radial-gradient(ellipse at 50% 35%,#bdbdbd,#959595 65%,#707070);border:1px solid #4e4e4e;box-shadow:0 1px 1px #cfcfcf"></div>
<svg class="a" style="left:751px;top:349px" width="12" height="11"><polygon points="1.5,1 10.5,5.5 1.5,10" fill="#52f028" stroke="#52f028" stroke-width="1" stroke-linejoin="round"/></svg>
<div class="t" style="left:772.00px;top:348.72px;font-size:10.6px;color:#1a1a1a;-webkit-text-stroke:0.3px #1a1a1a;transform:scaleX(0.9183);">Voltage Filter</div>
<div class="a" style="left:727.5px;top:368.2px;width:96.5px;height:26.5px;background:linear-gradient(180deg,#bebebe,#acacac);border:1px solid #585858;border-radius:1px;box-shadow:inset 1px 1px 0 #d4d4d4,inset 3px 0 2px -1px #cacaca,inset -2px -2px 1px #767676"></div>
<div class="t" style="left:753.30px;top:377.02px;font-size:10.6px;color:#1a1a1a;-webkit-text-stroke:0.3px #1a1a1a;transform:scaleX(0.9020);">AutoScale</div>
<div class="a" style="left:727.5px;top:397px;width:96.5px;height:26.3px;background:linear-gradient(180deg,#bebebe,#acacac);border:1px solid #585858;border-radius:1px;box-shadow:inset 1px 1px 0 #d4d4d4,inset 3px 0 2px -1px #cacaca,inset -2px -2px 1px #767676"></div>
<div class="t" style="left:745.10px;top:405.82px;font-size:10.6px;color:#1a1a1a;-webkit-text-stroke:0.3px #1a1a1a;transform:scaleX(0.9372);">Match Length</div>
<div class="co" style="left:-0.7px;top:75.0px;width:27px;height:27px"></div>
<div class="t" style="left:9.64px;top:83.12px;font-size:11.2px;color:#ffffff;font-weight:bold;transform:scaleX(1.0800);">1</div>
<div class="co" style="left:193.0px;top:250.5px;width:27px;height:27px"></div>
<div class="t" style="left:203.34px;top:258.62px;font-size:11.2px;color:#ffffff;font-weight:bold;transform:scaleX(1.0800);">2</div>
<div class="co" style="left:66.0px;top:334.9px;width:27px;height:27px"></div>
<div class="t" style="left:76.34px;top:343.02px;font-size:11.2px;color:#ffffff;font-weight:bold;transform:scaleX(1.0800);">3</div>
<div class="co" style="left:388.0px;top:474.7px;width:27px;height:27px"></div>
<div class="t" style="left:398.34px;top:482.82px;font-size:11.2px;color:#ffffff;font-weight:bold;transform:scaleX(1.0800);">4</div>
<div class="co" style="left:734.1px;top:316.8px;width:27px;height:27px"></div>
<div class="t" style="left:744.44px;top:324.92px;font-size:11.2px;color:#ffffff;font-weight:bold;transform:scaleX(1.0800);">5</div>
<div class="co" style="left:824.5px;top:366.5px;width:27px;height:27px"></div>
<div class="t" style="left:834.84px;top:374.62px;font-size:11.2px;color:#ffffff;font-weight:bold;transform:scaleX(1.0800);">6</div>
<div class="co" style="left:824.5px;top:399.1px;width:27px;height:27px"></div>
<div class="t" style="left:834.84px;top:407.22px;font-size:11.2px;color:#ffffff;font-weight:bold;transform:scaleX(1.0800);">7</div>
<div class="co" style="left:434.1px;top:46.9px;width:27px;height:27px"></div>
<div class="t" style="left:444.44px;top:55.02px;font-size:11.2px;color:#ffffff;font-weight:bold;transform:scaleX(1.0800);">9</div>
<div class="co" style="left:606.8px;top:46.1px;width:30px;height:30px"></div>
<div class="t" style="left:615.29px;top:55.72px;font-size:11.2px;color:#ffffff;font-weight:bold;transform:scaleX(1.0800);">10</div>
<div class="co" style="left:826.5px;top:142.0px;width:28px;height:28px"></div>
<div class="t" style="left:834.32px;top:150.62px;font-size:11.2px;color:#ffffff;font-weight:bold;transform:scaleX(1.0800);">11</div>
<div class="co" style="left:649.6px;top:22.0px;width:30px;height:30px"></div>
<div class="t" style="left:658.09px;top:31.62px;font-size:11.2px;color:#ffffff;font-weight:bold;transform:scaleX(1.0800);">12</div>
<div class="co" style="left:368.5px;top:20.0px;width:30px;height:30px"></div>
<div class="t" style="left:376.99px;top:29.62px;font-size:11.2px;color:#ffffff;font-weight:bold;transform:scaleX(1.0800);">13</div>
<div class="co" style="left:516.3px;top:189.9px;width:27px;height:27px;box-shadow:none"></div>
<div class="t" style="left:526.49px;top:197.92px;font-size:11.2px;color:#e6e6e6;-webkit-text-stroke:0.25px #e6e6e6;transform:scaleX(1.0000);">8</div>
</body></html>
